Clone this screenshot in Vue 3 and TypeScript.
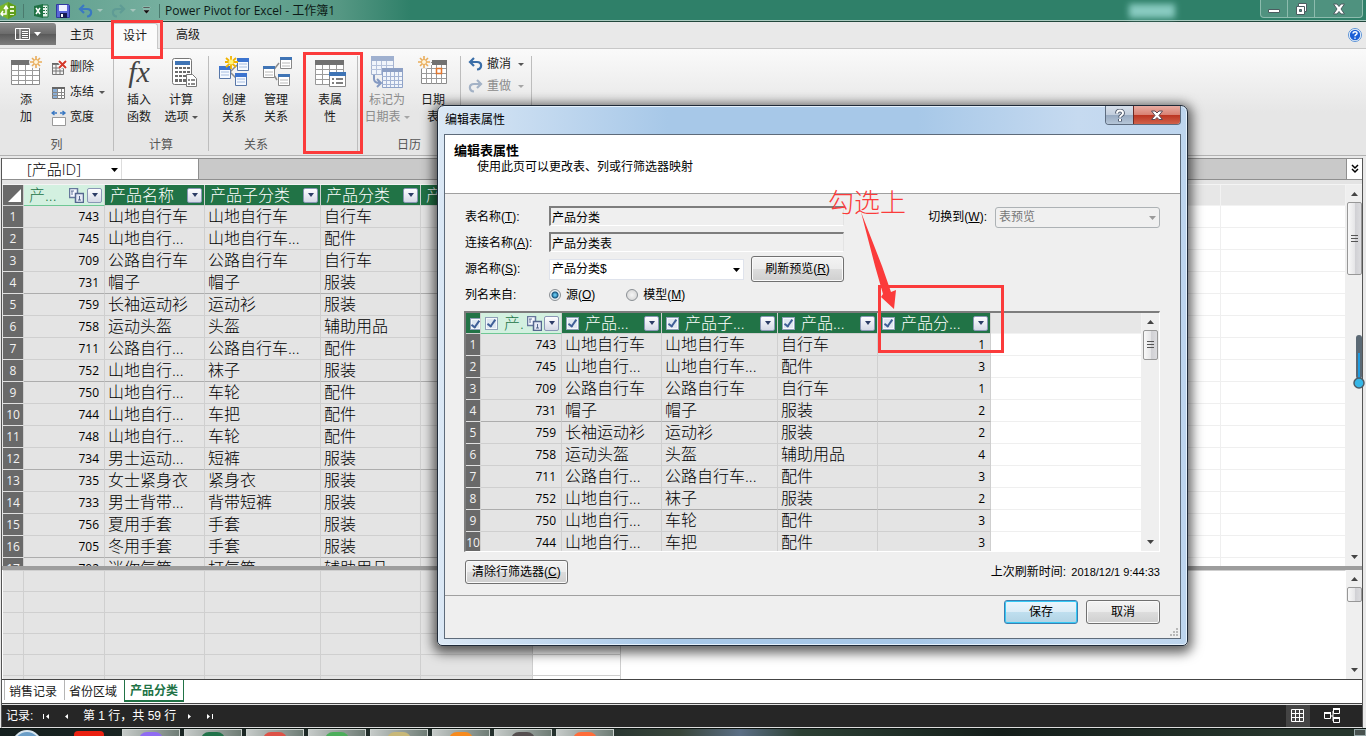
<script setup lang="ts">
import { ref } from 'vue'

interface Product {
  id: number
  name: string
  sub: string
  kind: string
  kindId: number
}

const products: Product[] = [
  { id: 743, name: '山地自行车', sub: '山地自行车', kind: '自行车', kindId: 1 },
  { id: 745, name: '山地自行...', sub: '山地自行车...', kind: '配件', kindId: 3 },
  { id: 709, name: '公路自行车', sub: '公路自行车', kind: '自行车', kindId: 1 },
  { id: 731, name: '帽子', sub: '帽子', kind: '服装', kindId: 2 },
  { id: 759, name: '长袖运动衫', sub: '运动衫', kind: '服装', kindId: 2 },
  { id: 758, name: '运动头盔', sub: '头盔', kind: '辅助用品', kindId: 4 },
  { id: 711, name: '公路自行...', sub: '公路自行车...', kind: '配件', kindId: 3 },
  { id: 752, name: '山地自行...', sub: '袜子', kind: '服装', kindId: 2 },
  { id: 750, name: '山地自行...', sub: '车轮', kind: '配件', kindId: 3 },
  { id: 744, name: '山地自行...', sub: '车把', kind: '配件', kindId: 3 },
  { id: 748, name: '山地自行...', sub: '车轮', kind: '配件', kindId: 3 },
  { id: 734, name: '男士运动...', sub: '短裤', kind: '服装', kindId: 2 },
  { id: 735, name: '女士紧身衣', sub: '紧身衣', kind: '服装', kindId: 2 },
  { id: 733, name: '男士背带...', sub: '背带短裤', kind: '服装', kindId: 2 },
  { id: 756, name: '夏用手套', sub: '手套', kind: '服装', kindId: 2 },
  { id: 705, name: '冬用手套', sub: '手套', kind: '服装', kindId: 2 },
  { id: 702, name: '迷你气筒', sub: '打气筒', kind: '辅助用品', kindId: 4 },
]
const preview = products.slice(0, 10)

const mainHeads = ['产...', '产品名称', '产品子分类', '产品分类', '产']
const previewHeads = ['产.', '产品...', '产品子...', '产品...', '产品分...']
const checks = ref([true, true, true, true, true])
const allChecked = ref(true)
const source = ref('source')

const tasks = [
  { id: 't1', color: '#8f6cf2' },
  { id: 't2', color: '#21734a' },
  { id: 't3', color: '#dd5247' },
  { id: 't4', color: '#4cae5b' },
  { id: 't5', color: '#c8b878' },
  { id: 't6', color: '#f78b1e' },
  { id: 't7', color: '#554f50' },
  { id: 't8', color: '#ff6d3a' },
]
</script>

<template>
  <div class="desktop">
    <header class="titlebar">
      <svg class="logo" width="17" height="17" viewBox="0 0 17 17">
        <path d="M8 0l8 4v9l-8 4-8-4V4z" fill="#79b62b" />
        <path d="M8 0l8 4v9l-8 4z" fill="#5f9e1c" />
        <path d="M2 12h4V5M4 7l2-3 2 3M3 9l-2 3 2 2" fill="none" stroke="#fff" stroke-width="1.4" />
        <path d="M10 4h4v2h-4zM10 8h4v2h-4zM10 12h4v1h-4z" fill="#e9f6d4" />
      </svg>
      <span class="tsep s1"></span>
      <svg class="xl" width="15" height="14" viewBox="0 0 15 14">
        <path d="M8 1h6v12H8z" fill="#e6f2ec" stroke="#1f7244" />
        <path d="M9 3h2v1H9zM12 3h1v1h-1zM9 6h2v1H9zM12 6h1v1h-1zM9 9h2v1H9zM12 9h1v1h-1z" fill="#1f7244" />
        <path d="M0 2l9-2v14l-9-2z" fill="#1f7244" />
        <path d="M2 4l4 6M6 4l-4 6" stroke="#fff" stroke-width="1.5" />
      </svg>
      <svg class="save" width="14" height="14" viewBox="0 0 14 14">
        <path d="M.5.5h12l1 1v12H.5z" fill="#5a66d6" stroke="#3039a0" />
        <path d="M3 1h8v6H3z" fill="#eef1ff" /><path d="M4 9h7v5H4z" fill="#161a52" /><path d="M5 10h2v3H5z" fill="#fff" />
      </svg>
      <svg class="undo" width="15" height="14" viewBox="0 0 15 14">
        <path d="M6 1L2 5l4 4M2 5h7c6 0 5 7 0 7.500" fill="none" stroke="#3a78c2" stroke-width="2.200" />
      </svg>
      <span class="tri faint"></span>
      <svg class="redo" width="15" height="14" viewBox="0 0 15 14">
        <path d="M9 1l4 4-4 4M13 5H6c-6 0-5 7 0 7.500" fill="none" stroke="#5f9c95" stroke-width="2.200" />
      </svg>
      <span class="tri faint"></span>
      <svg class="qat" width="9" height="9" viewBox="0 0 9 9">
        <path d="M1 1h7v1H1zM1 4h7L4.500 8z" fill="#111" stroke="#d8e9e2" stroke-width=".4" />
      </svg>
      <span class="tsep"></span>
      <h1>Power Pivot for Excel - 工作簿1</h1>
      <span class="ghost"></span>
      <div class="winbtns">
        <button type="button" aria-label="最小化"><svg width="14" height="12" viewBox="0 0 14 12"><path d="M1.500 6.500h11v3h-11z" fill="#fff" stroke="#4b5d60" /></svg></button>
        <button type="button" aria-label="还原"><svg width="14" height="14" viewBox="0 0 14 14"><path fill-rule="evenodd" d="M4.500 1.500h8v8h-2v3h-8v-8h2zM5.500 7.500v2h2v-2z" fill="#fff" stroke="#4b5d60" /><path d="M4.500 4.500h6v5" fill="none" stroke="#4b5d60" /></svg></button>
        <button type="button" class="wide" aria-label="关闭"><svg width="14" height="12" viewBox="0 0 14 12"><path d="M1.500 1h3.500l2 2.500L9 1h3.500L9 6l3.500 5H9L7 8.500 5 11H1.500L5 6z" fill="#fff" stroke="#4b5d60" /></svg></button>
      </div>
    </header>

    <nav class="tabs">
      <button type="button" class="file" aria-label="文件">
        <svg width="26" height="12" viewBox="0 0 26 12">
          <path d="M.5.5h14v11H.5z" fill="none" stroke="#fff" /><path d="M5 1v10" stroke="#fff" /><path d="M7 3.500h6M7 5.500h6M7 7.500h6M7 9.500h6" stroke="#fff" /><path d="M19 4h7l-3.500 4z" fill="#fff" />
        </svg>
      </button>
      <button type="button" class="tab">主页</button>
      <button type="button" class="tab on">设计</button>
      <button type="button" class="tab">高级</button>
      <button type="button" class="help" aria-label="帮助">
        <svg width="14" height="14" viewBox="0 0 14 14"><circle cx="7" cy="7" r="6.500" fill="#fff" stroke="#5c93d6" /><circle cx="7" cy="7" r="5.200" fill="#1d5fd6" /><path d="M5 5.500C5 3 9.300 3.200 9 5.300 8.800 6.800 7 6.600 7 8.300M7 9.500v1.300" fill="none" stroke="#fff" stroke-width="1.500" /></svg>
      </button>
    </nav>

    <section class="ribbon">
      <div class="group g1">
        <div class="tools">
          <button type="button" class="big">
            <svg width="32" height="32" viewBox="0 0 32 32">
              <path d="M1.500 7.500h28v21h-28z" fill="#fff" stroke="#8a8a8a" /><path d="M1 4h20v5H1z" fill="#717171" /><path d="M1 14.500h28M1 19.500h28M1 24.500h28M8.500 9v19M15.500 9v19M22.500 9v19" stroke="#9b9b9b" />
              <circle cx="26" cy="6" r="7" fill="#f6f6f6" /><path d="M26 0v12M20 6h12M22 2l8 8M30 2l-8 8" stroke="#e9ad5b" stroke-width="1.600" /><circle cx="26" cy="6" r="2.500" fill="#fff5dd" stroke="#e9ad5b" />
            </svg>
            <span>添</span><span>加</span>
          </button>
          <div class="smalls">
            <button type="button">
              <svg width="16" height="16" viewBox="0 0 16 16"><path d="M1 3h8v2H1z" fill="#666" /><path d="M1.500 4.500h11v10h-11zM1 8h11M1 11h11M5 5v9M9 5v9" fill="none" stroke="#777" /><path d="M8 1l7 7M15 1L8 8" stroke="#fff" stroke-width="4" /><path d="M8 1l7 7M15 1L8 8" stroke="#d4382a" stroke-width="2" /></svg>删除
            </button>
            <button type="button">
              <svg width="16" height="16" viewBox="0 0 16 16"><path d="M1.500 2.500h12v11h-12z" fill="#fff" stroke="#777" /><path d="M1 2h13v2H1z" fill="#666" /><path d="M2 4h4v9H2z" fill="#8aaed6" /><path d="M1 7.500h13M1 10.500h13M6.500 4v10M10.500 4v10" stroke="#888" /></svg>冻结<i class="tri"></i>
            </button>
            <button type="button">
              <svg width="16" height="16" viewBox="0 0 16 16"><path d="M1 3h5M9 3h5M3.500 1L1 3l2.500 2M11.500 1L14 3l-2.500 2" fill="none" stroke="#3a78c2" stroke-width="1.400" /><path d="M1.500 7.500h13v8h-13z" fill="#fff" stroke="#999" /></svg>宽度
            </button>
          </div>
        </div>
        <p>列</p>
      </div>
      <div class="group g2">
        <div class="tools">
          <button type="button" class="big">
            <span class="fx">fx</span>
            <span>插入</span><span>函数</span>
          </button>
          <button type="button" class="big">
            <svg width="32" height="32" viewBox="0 0 32 32">
              <rect x="7.500" y="2.500" width="19" height="26" rx="2" fill="#fff" stroke="#777" /><path d="M10 5h15v4H10z" fill="#3f74b5" /><path d="M10 11h3v2h-3zM14 11h3v2h-3zM18 11h3v2h-3zM22 11h3v2h-3zM10 15h3v2h-3zM14 15h3v2h-3zM18 15h3v2h-3zM22 15h3v2h-3zM10 19h3v2h-3zM14 19h3v2h-3zM18 19h3v2h-3zM10 23h3v3h-3zM14 23h3v3h-3zM18 23h3v3h-3z" fill="#6b6b6b" />
              <path d="M21.500 18.500h6l4 4v8h-10z" fill="#fff" stroke="#777" /><path d="M23 24h2M26 24h4M23 28h2M26 28h4" stroke="#666" stroke-width="1.600" />
            </svg>
            <span>计算</span><span>选项<i class="tri"></i></span>
          </button>
        </div>
        <p>计算</p>
      </div>
      <div class="group g3">
        <div class="tools">
          <button type="button" class="big">
            <svg width="32" height="32" viewBox="0 0 32 32">
              <path d="M12 16l7-7M12 16l7 7" stroke="#8c8c8c" stroke-width="1.500" />
              <g fill="#f5f9ff" stroke="#5877a8"><path d="M1.500 11.500h11v11h-11zM19.500 3.500h11v11h-11zM17.500 18.500h11v11h-11z" /></g>
              <path d="M1 10h12v4H1zM19 2h12v4H19zM17 17h12v4H17z" fill="#3c74cf" /><path d="M3 16h8M3 19h8M21 8h8M21 11h8M19 23h8M19 26h8" stroke="#a6bde0" />
              <path d="M13 0v13M7 6h13M8 2l10 9M18 2L8 11" stroke="#f0b400" stroke-width="1.800" /><circle cx="13" cy="6" r="2.500" fill="#fff47a" />
            </svg>
            <span>创建</span><span>关系</span>
          </button>
          <button type="button" class="big">
            <svg width="32" height="32" viewBox="0 0 32 32">
              <path d="M12 16l7-9M12 16l5 8" stroke="#8c8c8c" stroke-width="1.500" />
              <g fill="#fff" stroke="#888"><path d="M3.500 11.500h11v10h-11zM20.500 2.500h11v10h-11zM18.500 19.500h11v10h-11z" /></g>
              <path d="M3 10h12v3H3zM20 1h12v3H20zM18 18h12v3H18z" fill="#3f74b5" /><path d="M5 16h8M5 19h8M22 7h8M22 10h8M20 24h8M20 27h8" stroke="#b9b9b9" />
            </svg>
            <span>管理</span><span>关系</span>
          </button>
        </div>
        <p>关系</p>
      </div>
      <div class="group g4">
        <div class="tools">
          <button type="button" class="big">
            <svg width="32" height="32" viewBox="0 0 32 32">
              <path d="M1.500 4.500h28v24h-28z" fill="#fff" stroke="#999" /><path d="M1 4h29v5H1z" fill="#717171" /><path d="M1 13.500h28M1 18.500h28M1 23.500h28M8.500 9v19M15.500 9v19M22.500 9v19" stroke="#9b9b9b" />
              <path d="M15.500 16.500h16v14h-16z" fill="#fff" stroke="#888" /><path d="M15 16h17v4H15z" fill="#3f74b5" /><path d="M18 23h2M22 23h7M18 27h2M22 27h7" stroke="#555" stroke-width="1.500" />
            </svg>
            <span>表属</span><span>性</span>
          </button>
        </div>
      </div>
      <div class="group g5">
        <div class="tools">
          <button type="button" class="big off" disabled>
            <svg width="34" height="32" viewBox="0 0 34 32">
              <path d="M1.500 1.500h22v17h-22z" fill="#f1f5fb" stroke="#a6b4d0" /><path d="M1 0h23v5H1z" fill="#9fb0cf" /><path d="M1 9.500h22M1 13.500h22M6.500 5v13M11.500 5v13M16.500 5v13" stroke="#b5c2dc" />
              <path d="M12.500 13.500h20v18h-20z" fill="#f1f5fb" stroke="#8fa3c8" /><path d="M12 12h21v4H12z" fill="#8c9fc4" /><path d="M12 20.500h20M12 24.500h20M12 28.500h20M16.500 16v15M20.500 16v15M24.500 16v15M28.500 16v15" stroke="#a4b4d4" />
              <path d="M4 19v4c0 3 2 4 6 4M7 23l4 4-4 4" fill="none" stroke="#8499c2" stroke-width="2" />
            </svg>
            <span>标记为</span><span>日期表<i class="tri"></i></span>
          </button>
          <button type="button" class="big date">
            <svg width="32" height="32" viewBox="0 0 32 32">
              <path d="M4.500 6.500h25v21h-25z" fill="#fff" stroke="#8a8a8a" /><path d="M15 4h15v5H15z" fill="#717171" /><path d="M4 12.500h25M4 17.500h25M4 22.500h25M9.500 9v19M14.500 9v19M19.500 9v19M24.500 9v19" stroke="#9b9b9b" /><path d="M19.500 12.500h5v5h-5z" fill="#fff" stroke="#e2762d" stroke-width="1.500" />
              <circle cx="7" cy="6" r="7" fill="#f6f6f6" /><path d="M7 0v12M1 6h12M3 2l8 8M11 2l-8 8" stroke="#e9ad5b" stroke-width="1.600" /><circle cx="7" cy="6" r="2.500" fill="#fff5dd" stroke="#e9ad5b" />
            </svg>
            <span>日期</span><span>表</span>
          </button>
        </div>
        <p>日历</p>
      </div>
      <div class="group g6">
        <div class="smalls">
          <button type="button">
            <svg width="16" height="14" viewBox="0 0 16 14"><path d="M6 1L2 5l4 4M2 5h7c6 0 5 7 0 7.500" fill="none" stroke="#3a6ea8" stroke-width="2.200" /></svg>撤消<i class="tri"></i>
          </button>
          <button type="button" class="off" disabled>
            <svg width="16" height="14" viewBox="0 0 16 14"><path d="M9 1l4 4-4 4M13 5H6c-6 0-5 7 0 7.500" fill="none" stroke="#a3b2c6" stroke-width="2.200" /></svg>重做<i class="tri"></i>
          </button>
        </div>
      </div>
    </section>

    <main class="work">
      <div class="formula">
        <select class="name" aria-label="名称框"><option>[产品ID]</option></select>
        <svg class="caret" width="7" height="4" viewBox="0 0 7 4"><path d="M0 0h7L3.500 4z" fill="#000" /></svg>
        <input class="fx-input" type="text" aria-label="公式" />
        <span class="fill"></span>
        <button type="button" class="expand" aria-label="展开">
          <svg width="8" height="10" viewBox="0 0 8 10"><path d="M1 1l3 3 3-3M1 5l3 3 3-3" fill="none" stroke="#000" stroke-width="1.500" /></svg>
        </button>
      </div>

      <div class="pane upper">
        <div class="clip">
          <table class="grid">
            <colgroup><col class="c0" /><col class="c1" /><col class="c2" /><col class="c3" /><col class="c4" /><col class="c5" /><col class="c6" /><col /></colgroup>
            <thead>
              <tr>
                <th class="corner"><svg width="13" height="13" viewBox="0 0 13 13"><path d="M13 0v13H0z" fill="#fff" /></svg></th>
                <th v-for="(h, i) in mainHeads" :key="i" scope="col" class="green" :class="{ sel: i === 0 }">
                  <div class="th">
                    <span>{{ h }}</span>
                    <svg v-if="i === 0" width="15" height="15" viewBox="0 0 15 15"><path d="M.5.500h8v9h-8z" fill="#f6f8ff" stroke="#66779c" stroke-width="1.500" /><path d="M3 3v4M2 3h3" stroke="#66779c" /><path d="M6.500 5.500h8v9h-8z" fill="#e6eaf6" stroke="#55678f" stroke-width="1.500" /><path d="M10.500 8v4M9 12h3" stroke="#55678f" /></svg>
                    <button type="button" class="flt" aria-label="筛选"><svg width="6" height="4" viewBox="0 0 6 4"><path d="M0 0h6L3 4z" fill="#2c3c66" /></svg></button>
                  </div>
                </th>
                <th class="blank"></th><th class="blank"></th>
              </tr>
            </thead>
            <tbody>
              <tr v-for="(p, i) in products" :key="p.id" :class="{ heavy: i % 4 === 3 }">
                <th scope="row">{{ i + 1 }}</th>
                <td class="num">{{ p.id }}</td><td>{{ p.name }}</td><td>{{ p.sub }}</td><td>{{ p.kind }}</td><td></td>
                <td class="empty"></td><td class="empty"></td>
              </tr>
            </tbody>
          </table>
        </div>
        <div class="scroll">
          <svg width="7" height="4" viewBox="0 0 7 4"><path d="M0 4h7L3.500 0z" fill="#444" /></svg>
          <span class="thumb tall"><i></i></span>
          <svg class="down" width="7" height="4" viewBox="0 0 7 4"><path d="M0 0h7L3.500 4z" fill="#444" /></svg>
        </div>
      </div>
      <div class="pane lower">
        <div class="clip">
          <table class="grid calc" aria-label="计算区域">
            <colgroup><col class="c0" /><col class="c1" /><col class="c2" /><col class="c3" /><col class="c4" /><col class="c5" /><col class="c7" /><col /></colgroup>
            <tbody>
              <tr v-for="r in 6" :key="r"><td v-for="c in 8" :key="c"></td></tr>
            </tbody>
          </table>
        </div>
        <div class="scroll">
          <svg width="7" height="4" viewBox="0 0 7 4"><path d="M0 4h7L3.500 0z" fill="#444" /></svg>
          <span class="thumb short"></span>
          <svg class="down" width="7" height="4" viewBox="0 0 7 4"><path d="M0 0h7L3.500 4z" fill="#444" /></svg>
        </div>
      </div>

      <nav class="sheets">
        <button type="button">销售记录</button>
        <button type="button">省份区域</button>
        <button type="button" class="on">产品分类</button>
      </nav>

      <footer class="status">
        <span class="rec">记录:</span>
        <button type="button" aria-label="首行"><svg width="7" height="7" viewBox="0 0 7 7"><path d="M0 1h1v5H0zM6 1v5L3 3.500z" fill="#fff" /></svg></button>
        <button type="button" aria-label="上一行"><svg width="7" height="7" viewBox="0 0 7 7"><path d="M5 1v5L2 3.500z" fill="#fff" /></svg></button>
        <span class="pos">第 1 行，共 59 行</span>
        <button type="button" aria-label="下一行"><svg width="7" height="7" viewBox="0 0 7 7"><path d="M2 1v5l3-2.500z" fill="#fff" /></svg></button>
        <button type="button" aria-label="末行"><svg width="7" height="7" viewBox="0 0 7 7"><path d="M6 1h1v5H6zM1 1v5l3-2.500z" fill="#fff" /></svg></button>
        <button type="button" class="view on" aria-label="数据视图"><svg width="14" height="14" viewBox="0 0 14 14"><path d="M.500.500h12v12h-12zM.500 4.500h12M.500 8.500h12M4.500.500v12M8.500.500v12" fill="none" stroke="#fff" /></svg></button>
        <button type="button" class="view" aria-label="关系图视图"><svg width="17" height="16" viewBox="0 0 17 16"><path d="M6 8h3M9 3v10" stroke="#fff" /><path d="M.500 4.500h6v6h-6zM9.500.500h6v5h-6zM9.500 9.500h6v5h-6z" fill="#262626" stroke="#fff" /><path d="M0 4h7v2H0zM9 0h7v2H9zM9 9h7v2H9z" fill="#fff" /></svg></button>
      </footer>
    </main>

    <footer class="taskbar">
      <span class="orb"></span><span class="pin"></span>
      <span v-for="t in tasks" :key="t.id" class="task"><i :style="{ background: t.color }"></i></span>
      <span class="peek"></span>
    </footer>

    <section class="dialog" role="dialog" aria-labelledby="dlg-title">
      <div class="dlg-bar">
        <h2 id="dlg-title">编辑表属性</h2>
        <div class="dlg-btns">
          <button type="button" aria-label="帮助"><svg width="10" height="13" viewBox="0 0 10 13"><path d="M2 4.500C2 .500 8 .800 8 4.200 8 6.500 5 6 5 8.500M5 10v2.500" fill="none" stroke="#4a5568" stroke-width="3.800" /><path d="M2 4.500C2 .500 8 .800 8 4.200 8 6.500 5 6 5 8.500M5 10v2" fill="none" stroke="#fff" stroke-width="2" /></svg></button>
          <button type="button" class="x" aria-label="关闭"><svg width="12" height="11" viewBox="0 0 12 11"><path d="M.500 1h3.500l2 2 2-2h3.500L8 5.500l3.500 4H8l-2-2-2 2H.500L4 5.500z" fill="#fff" stroke="#5b4a55" /></svg></button>
        </div>
      </div>
      <form class="dlg-body" @submit.prevent>
        <div class="intro">
          <h3>编辑表属性</h3>
          <p>使用此页可以更改表、列或行筛选器映射</p>
        </div>
        <div class="content">
          <div class="form">
            <label for="f-name">表名称(<u>T</u>):</label>
            <input id="f-name" class="sunk" type="text" value="产品分类" readonly />
            <div class="switch">
              <label for="f-view">切换到(<u>W</u>):</label>
              <span class="combo grey">
                <select id="f-view" disabled><option>表预览</option></select>
                <svg width="7" height="4" viewBox="0 0 7 4"><path d="M0 0h7L3.500 4z" fill="#9a9a9a" /></svg>
              </span>
            </div>
            <label for="f-conn">连接名称(<u>A</u>):</label>
            <input id="f-conn" class="sunk" type="text" value="产品分类表" readonly />
            <label class="r3" for="f-src">源名称(<u>S</u>):</label>
            <div class="src">
              <span class="combo">
                <select id="f-src"><option>产品分类$</option></select>
                <svg width="7" height="4" viewBox="0 0 7 4"><path d="M0 0h7L3.500 4z" fill="#000" /></svg>
              </span>
              <button type="button" class="btn refresh">刷新预览(<u>R</u>)</button>
            </div>
            <span class="r4">列名来自:</span>
            <div class="radios">
              <label><input v-model="source" type="radio" name="src" value="source" />源(<u>O</u>)</label>
              <label><input v-model="source" type="radio" name="src" value="model" />模型(<u>M</u>)</label>
            </div>
          </div>

          <div class="preview">
            <div class="clip">
              <table class="grid">
                <colgroup><col class="p0" /><col class="c1" /><col class="c2" /><col class="c3" /><col class="c4" /><col class="p5" /><col /></colgroup>
                <thead>
                  <tr>
                    <th class="green all"><input v-model="allChecked" type="checkbox" aria-label="全选" /></th>
                    <th v-for="(h, i) in previewHeads" :key="i" scope="col" class="green" :class="{ sel: i === 0 }">
                      <div class="th ck">
                        <input v-model="checks[i]" type="checkbox" :aria-label="h" />
                        <span>{{ h }}</span>
                        <svg v-if="i === 0" width="15" height="15" viewBox="0 0 15 15"><path d="M.5.500h8v9h-8z" fill="#f6f8ff" stroke="#66779c" stroke-width="1.500" /><path d="M3 3v4M2 3h3" stroke="#66779c" /><path d="M6.500 5.500h8v9h-8z" fill="#e6eaf6" stroke="#55678f" stroke-width="1.500" /><path d="M10.500 8v4M9 12h3" stroke="#55678f" /></svg>
                        <button type="button" class="flt" aria-label="筛选"><svg width="6" height="4" viewBox="0 0 6 4"><path d="M0 0h6L3 4z" fill="#2c3c66" /></svg></button>
                      </div>
                    </th>
                    <th class="blank"></th>
                  </tr>
                </thead>
                <tbody>
                  <tr v-for="(p, i) in preview" :key="p.id" :class="{ heavy: i % 4 === 3 }">
                    <th scope="row">{{ i + 1 }}</th>
                    <td class="num">{{ p.id }}</td><td>{{ p.name }}</td><td>{{ p.sub }}</td><td>{{ p.kind }}</td><td class="num">{{ p.kindId }}</td>
                    <td class="empty"></td>
                  </tr>
                </tbody>
              </table>
            </div>
            <div class="scroll">
              <svg width="7" height="4" viewBox="0 0 7 4"><path d="M0 4h7L3.500 0z" fill="#444" /></svg>
              <span class="thumb mid"><i></i></span>
              <svg class="down" width="7" height="4" viewBox="0 0 7 4"><path d="M0 0h7L3.500 4z" fill="#444" /></svg>
            </div>
          </div>

          <div class="under">
            <button type="button" class="btn">清除行筛选器(<u>C</u>)</button>
            <span>上次刷新时间: <time>2018/12/1 9:44:33</time></span>
          </div>
        </div>
        <div class="actions">
          <button type="submit" class="btn primary">保存</button>
          <button type="button" class="btn">取消</button>
          <svg class="grip" width="9" height="9" viewBox="0 0 9 9"><path d="M6 0h2v2H6zM3 3h2v2H3zM6 3h2v2H6zM0 6h2v2H0zM3 6h2v2H3zM6 6h2v2H6z" fill="#b8b8b8" /></svg>
        </div>
      </form>
    </section>

    <span class="mark m1"></span>
    <span class="mark m2"></span>
    <span class="mark m3"></span>
    <span class="note">勾选上</span>
    <svg class="arrow" width="40" height="100" viewBox="0 0 40 100"><path d="M1 0L15 54l8 28-2 3 13 12 2-19-5 2-9-26z" fill="#fb3b3b" /></svg>
    <svg class="gauge" width="14" height="56" viewBox="0 0 14 56"><rect x="4" y="1" width="6" height="44" rx="3" fill="#5b6974" /><path d="M7 19v26" stroke="#1e9be0" stroke-width="2" /><circle cx="7" cy="49" r="5" fill="#35b6e6" stroke="#4c5c68" stroke-width="1.500" /></svg>
  </div>
</template>

<style>
html, body { margin: 0; overflow: hidden; }
</style>

<style scoped>
.desktop {
  position: relative;
  display: flex;
  flex-direction: column;
  height: 100vh;
  overflow: hidden;
  background: #e9e9e9;
  color: #1a1a1a;
  font: 12px/17px "Liberation Sans", "Noto Sans CJK SC", sans-serif;
}
.desktop * { box-sizing: border-box; }
h1, h2, h3, p { margin: 0; font-weight: 400; }
button, input, select { font: inherit; color: inherit; }
button { padding: 0; border: 0; background: none; }
svg { display: block; flex: none; }
.tri { display: inline-block; width: 0; height: 0; border: 3px solid transparent; border-top-color: #555; border-bottom: 0; vertical-align: middle; flex: none; }

/* title bar */
.titlebar {
  display: flex;
  align-items: center;
  flex: none;
  height: 22px;
  background: linear-gradient(90deg, #5b9b89 0, #78b1a1 180px, #559783 340px, #2f8069 410px, #2f8069);
  border-bottom: 1px solid #21473c;
  box-shadow: inset 0 -1px #a7cabf;
}
.tsep { width: 1px; height: 14px; background: #4a7a6d; margin: 0 5px 0 8px; }
.tsep.s1 { margin: 0 10px 0 6px; }
.save { margin-left: 7px; }
.undo { margin-left: 8px; }
.redo { margin-left: 8px; }
.tri.faint { margin-left: 4px; border-top-color: #a6c5bd; }
.qat { margin-left: 6px; }
.titlebar h1 { font: 12px/20px "Open Sans", "Noto Sans CJK SC", sans-serif; color: #0d1a16; white-space: nowrap; }
.ghost { width: 46px; height: 14px; margin-left: auto; margin-right: 85px; background: #9fded7; filter: blur(3px); opacity: .8; }
.winbtns { display: flex; align-self: flex-start; margin-right: 3px; border: 1px solid #8dbcae; border-top: 0; border-radius: 0 0 4px 4px; background: #4f927f; }
.winbtns button { display: flex; align-items: center; justify-content: center; width: 27px; height: 17px; border-right: 1px solid #8dbcae; }
.winbtns button.wide { width: 47px; border-right: 0; }

/* tab row */
.tabs { display: flex; align-items: flex-end; flex: none; height: 27px; border-bottom: 1px solid #c8c8c8; background: #e9e9e9; }
.file { display: flex; align-items: center; justify-content: center; align-self: flex-start; width: 56px; height: 22px; margin-top: 1px; border-radius: 0 3px 0 0; background: linear-gradient(#8b8b8b, #6b6b6b 50%, #5a5a5a 51%, #7d7d7d); }
.tab { width: 52px; height: 25px; }
.tab.on { width: 46px; margin: 0 4px; height: 26px; margin-bottom: -1px; background: #fbfbfb; border-radius: 3px 3px 0 0; border: 1px solid #c8c8c8; border-bottom: 0; }
.help { margin: 0 4px 6px auto; }

/* ribbon */
.ribbon { display: flex; flex: none; height: 107px; background: linear-gradient(#fafafa, #e6e6e6 60%, #e6e6e6); border-bottom: 1px solid #b2b2b2; }
.group { position: relative; display: flex; flex-direction: column; justify-content: space-between; margin: 7px 0 4px; border-right: 1px solid #bdbdbd; }
.group p { text-align: center; color: #555; line-height: 12px; }
.group .tools { display: flex; }
.big { display: flex; flex-direction: column; align-items: center; width: 42px; white-space: nowrap; }
.big > svg { margin-bottom: 4px; }
.big .tri { margin-left: 3px; }
.big .fx { height: 36px; font: italic 30px/32px "Liberation Serif", serif; color: #444; }
.off { color: #8b8b8b; }
.off .tri { border-top-color: #a5a5a5; }
.g1 { width: 114px; }
.g1 .tools { padding-left: 5px; }
.g2, .g3 { width: 95px; }
.g2 .tools, .g3 .tools { padding-left: 4px; }
.g4 { width: 54px; padding-left: 5px; }
.g5 { width: 103px; }
.g5 .big { width: 58px; }
.g5 .big.date { width: 34px; }
.g6 { width: 71px; padding-left: 7px; }
.smalls { display: flex; flex-direction: column; padding-left: 4px; }
.smalls button { display: flex; align-items: center; height: 25px; gap: 3px; white-space: nowrap; }
.smalls .tri { margin-left: 2px; }
.g1 .smalls { margin-top: -1px; }
.g6 .smalls { padding-left: 0; margin-top: -3px; }
.g6 .smalls button { height: 22px; }
.g6 .smalls .tri { margin-left: 4px; }

/* workspace */
.work { display: flex; flex-direction: column; flex: 1; min-height: 0; margin: 2px 3px 0 1px; border: 1px solid #555; border-top: 0; border-bottom-color: #ddd; background: #e4e4e4; }
.formula { position: relative; display: flex; flex: none; height: 22px; border: 1px solid #8f8f8f; border-left: 0; border-right: 0; background: #c9c9c9; }
.name { appearance: none; width: 120px; padding: 0 0 0 25px; border: 0; border-right: 1px solid #ddd; border-radius: 0; background: #fff; font: 300 15px/18px "Open Sans", "Noto Sans CJK SC", sans-serif; color: #000; }
.caret { position: absolute; left: 109px; top: 9px; }
.fx-input { width: 77px; padding: 0 4px; border: 0; border-right: 1px solid #8f8f8f; background: #fff; }
.fill { flex: 1; }
.expand { display: flex; align-items: center; justify-content: center; width: 16px; background: #fff; border-left: 1px solid #8f8f8f; }
.pane { display: flex; min-height: 0; overflow: hidden; }
.clip { flex: 1; min-width: 0; overflow: hidden; }
.upper { flex: 1; margin-top: 4px; padding-left: 1px; border-top: 1px solid #f4f4f4; }
.lower { flex: none; height: 113px; border-top: 4px solid #9d9d9d; background: #fff; padding-left: 1px; }

.grid { width: 100%; table-layout: fixed; border-collapse: separate; border-spacing: 0; font: 16px/21px "Open Sans", "Noto Sans CJK SC", sans-serif; color: #000; }
.c0 { width: 21px; } .c1 { width: 81px; } .c2 { width: 100px; } .c3 { width: 116px; } .c4 { width: 100px; } .c5 { width: 112px; } .c6 { width: 688px; } .c7 { width: 88px; }
.p0 { width: 15px; } .p5 { width: 113px; }
.grid th, .grid td { height: 22px; padding: 0 4px 0 3px; overflow: hidden; white-space: nowrap; text-align: left; font-weight: 300; border-right: 1px solid #cfcfcf; border-bottom: 1px solid #cfcfcf; background: #e4e4e4; }
.grid thead th { height: 21px; padding: 0; }
.grid tbody th { padding: 0; text-align: center; font-size: 12px; font-weight: 400; color: #f2f2f2; background: #696969; border-bottom-color: #e0e0e0; }
.grid .num { padding-right: 5px; text-align: right; font-size: 12px; font-weight: 400; }
.grid .empty { background: #fff; border-color: #efefef; }
.grid .heavy td { border-bottom-color: #adadad; }
.grid .heavy td.empty { border-bottom-color: #efefef; }
.grid thead th.corner { background: #696969; }
.corner svg { margin-left: 5px; }
.grid thead th.green { background: #217346; color: #fff; }
.grid thead th.sel { background: #d3f0e0; color: #217346; border-bottom-color: #6fc795; }
.grid thead th.blank { background: #e7e7e7; border-color: #f2f2f2; }
.th { display: flex; align-items: center; gap: 3px; height: 20px; padding: 0 2px 0 5px; line-height: 20px; }
.th span { flex: 1; min-width: 0; overflow: hidden; }
.th.ck { gap: 2px; padding-left: 4px; }
.th.ck span { margin-left: 4px; }
.flt { display: flex; align-items: center; justify-content: center; flex: none; width: 15px; height: 15px; border: 1px solid #8a96b5; border-radius: 2px; background: linear-gradient(#fdfdff, #d5d9e6); }
input[type="checkbox"] { appearance: none; position: relative; flex: none; width: 13px; height: 13px; margin: 0; border: 1px solid #8fa0b8; background: #dfe7f1; box-shadow: inset 0 0 0 1px #f5f8fc; }
input[type="checkbox"]:checked::after { content: ""; position: absolute; left: 3px; top: 0; width: 3px; height: 7px; border: solid #3f5f97; border-width: 0 2px 2px 0; transform: rotate(35deg); }
.all input { display: block; width: 11px; height: 12px; margin: 2px 0 0 4px; }
.all input[type="checkbox"]:checked::after { left: 2px; }

.calc td { height: 21px; }
.calc tr:first-child td { height: 22px; border-top: 1px solid #cfcfcf; }
.calc td:nth-child(n+7) { background: #fff; }
.calc td:nth-child(8) { border-color: #fff; }

.scroll { display: flex; flex-direction: column; align-items: center; flex: none; width: 16px; padding: 7px 0; background: #efefef; }
.thumb { display: flex; align-items: center; justify-content: center; width: 15px; margin-top: 6px; border: 1px solid #979797; border-radius: 2px; background: linear-gradient(90deg, #f8f8f8, #e6e6e8 50%, #cfcfd3 51%, #dcdcdf); }
.thumb.tall { height: 73px; } .thumb.mid { height: 30px; } .thumb.short { height: 15px; }
.thumb i { width: 7px; height: 8px; background: repeating-linear-gradient(#555 0 1px, transparent 1px 3px); }
.down { margin-top: auto; }

.sheets { display: flex; flex: none; height: 25px; padding-left: 2px; border-top: 1px solid #444; border-bottom: 1px solid #444; background: #fff; }
.sheets button { width: 60px; height: 20px; padding: 4px 3px 0 0; border-left: 1px solid #b5b5b5; }
.sheets .on { height: 22px; padding: 3px 0 0; border: 1px solid #217346; border-top: 0; border-bottom: 2px solid #217346; color: #217346; font-weight: 700; }
.status { display: flex; align-items: center; flex: none; height: 22px; margin-top: 1px; padding-left: 4px; background: #262626; color: #fff; white-space: nowrap; }
.rec { width: 37px; }
.status button { width: 20px; height: 22px; display: flex; align-items: center; justify-content: flex-start; }
.pos { width: 103px; }
.status .view { width: 24px; justify-content: center; }
.status .view.on { margin-left: auto; margin-right: 10px; background: #444; }
.status .view:last-child { margin-right: 18px; }

/* taskbar */
.taskbar { display: flex; flex: none; height: 8px; overflow: hidden; border-top: 1px solid #0c1512; background: linear-gradient(90deg, #15201f, #26332f 600px, #38453a 680px, #5b6f85 740px, #2c4034 800px, #141d1a 1000px, #26352c 1280px); }
.orb { flex: none; width: 30px; height: 30px; margin: 1px 30px 0 12px; border-radius: 50%; border: 2px solid #d6e4ee; background: #6a9dc6; }
.pin { flex: none; width: 30px; height: 12px; margin: 2px 18px 0 2px; border-radius: 4px; background: #ea2010; }
.task { display: flex; justify-content: center; flex: none; width: 58px; height: 12px; margin: 0 4px 0 0; border: 1px solid #cdd3d0; background: linear-gradient(90deg, #c5cac8, #6f7d76); }
.task i { width: 24px; height: 12px; margin-top: 2px; border-radius: 8px 8px 0 0; }
.peek { width: 12px; margin-left: auto; border: 1px solid #9aa; background: #48524f; }

/* dialog */
.dialog {
  position: absolute;
  left: 437px;
  top: 105px;
  width: 751px;
  padding: 0 6px 6px;
  border: 1px solid #1f2a38;
  border-radius: 7px 7px 5px 5px;
  background: linear-gradient(90deg, #dbe8f5 0, #b9d3ed 150px, #a7c8e8 230px, #a7c8e8 480px, #c6daf0 640px, #bdd5ee);
  box-shadow: inset 0 0 0 1px #e5f1fc, 0 3px 12px 4px rgba(0, 0, 0, .62);
}
.dlg-bar { display: flex; justify-content: space-between; height: 28px; }
.dlg-bar h2 { padding-left: 1px; font-size: 12px; line-height: 28px; color: #000; }
.dlg-btns { display: flex; align-self: flex-start; border: 1px solid #5d6c7f; border-top: 0; border-radius: 0 0 4px 4px; overflow: hidden; }
.dlg-btns button { display: flex; align-items: center; justify-content: center; width: 27px; height: 18px; background: linear-gradient(#d7e0eb, #c2cedd 48%, #96a9c0 50%, #b6c6d8); }
.dlg-btns .x { width: 47px; border-left: 1px solid #6a2a25; background: linear-gradient(#e9aca2, #d98274 48%, #bb3421 50%, #d0614a); }
.dlg-body { border: 1px solid #5e6b7a; background: #efefef; color: #000; }
.intro { height: 59px; padding: 8px 0 0 9px; border-bottom: 1px solid #a0a0a0; background: #fff; }
.intro h3 { font-size: 13px; line-height: 16px; font-weight: 700; }
.intro p { padding-left: 23px; line-height: 16px; }
.content { padding: 10px 20px 11px 19px; border-bottom: 1px solid #a0a0a0; }
.form { display: grid; grid-template-columns: 84px 295px 1fr; grid-auto-rows: 26px; align-items: center; white-space: nowrap; padding-left: 1px; }
.sunk { align-self: start; width: 295px; height: 20px; margin-top: 2px; padding: 0 1px; border: 2px solid #7d7d7d; border-right: 1px solid #e3e3e3; border-bottom: 1px solid #fff; background: #efefef; outline: 0; line-height: 16px; }
.switch { display: flex; align-items: center; justify-content: flex-end; gap: 8px; }
.r3, .r4 { grid-column: 1; }
#f-conn { grid-column: 2; }
.src { display: flex; align-items: center; gap: 7px; grid-column: 2 / 4; }
.combo { position: relative; display: block; width: 195px; }
.combo select { appearance: none; display: block; width: 100%; height: 21px; padding: 0 2px; border: 1px solid #dfe3ec; border-radius: 0; background: #fff; }
.combo svg { position: absolute; right: 4px; top: 9px; }
.combo.grey { width: 165px; }
.combo.grey select { padding-left: 3px; border: 1px solid #adb2b5; border-radius: 3px; background: #f0f0f0; color: #777; opacity: 1; }
.radios { display: flex; gap: 31px; grid-column: 2 / 4; }
.radios label { display: flex; align-items: center; }
.radios input { appearance: none; width: 12px; height: 12px; margin: 0 5px 0 0; border: 1px solid #8a8f94; border-radius: 50%; background: radial-gradient(#f5f5f5, #cfcfcf); }
.radios input:checked { background: radial-gradient(#5fc1ea 0 1px, #17547e 3px, #e8eef2 4px); }
.btn { height: 25px; padding: 0 6px; border: 1px solid #707070; border-radius: 3px; background: linear-gradient(#f3f3f3, #ebebeb 49%, #dddddd 50%, #cfcfcf); box-shadow: inset 0 0 0 1px #fafafa; white-space: nowrap; }
.refresh { width: 93px; height: 26px; }
.preview { display: flex; height: 241px; margin-top: 3px; border: 2px solid #7d7d7d; border-right: 1px solid #fff; border-bottom: 1px solid #fff; background: #fff; }
.preview .scroll { width: 17px; }
.under { display: flex; align-items: center; justify-content: space-between; margin-top: 8px; padding-left: 1px; }
.under time { font-size: 11px; padding-left: 2px; }
.under .btn { height: 24px; }
.actions { position: relative; display: flex; justify-content: flex-end; gap: 8px; height: 42px; padding: 4px 20px 0 0; }
.actions .btn { width: 74px; height: 24px; }
.actions .primary { border-color: #3c7fb1; background: linear-gradient(#eaf6fd, #dcedf7 49%, #bfdfef 50%, #b2d3e4); box-shadow: inset 0 0 0 1px #35c9f5; }
.grip { position: absolute; right: 1px; bottom: 1px; }

/* annotations */
.mark { position: absolute; border: 3px solid #fb3b3b; pointer-events: none; }
.m1 { left: 111px; top: 20px; width: 52px; height: 39px; }
.m2 { left: 303px; top: 52px; width: 60px; height: 102px; }
.m3 { left: 878px; top: 285px; width: 126px; height: 68px; }
.note { position: absolute; left: 828px; top: 185px; font: 300 26px/32px "Noto Sans CJK SC", sans-serif; color: #fb3b3b; }
.arrow { position: absolute; left: 860px; top: 212px; }
.gauge { position: absolute; right: 0; top: 334px; }
</style>
